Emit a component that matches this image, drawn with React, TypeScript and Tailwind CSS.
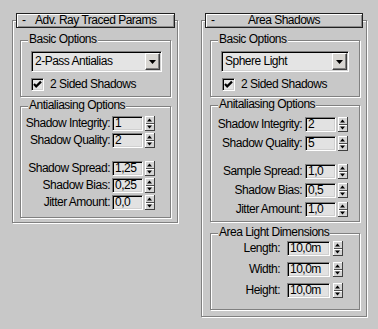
import React from "react";

const FONT =
  "font-['Liberation_Sans',Arial,sans-serif] text-[12px] tracking-[-0.5px] text-black";
const ETCH =
  "border border-[#808080] shadow-[inset_1px_1px_0_#ffffff,1px_1px_0_#ffffff]";
const SUNKEN =
  "border border-t-[#808080] border-l-[#808080] border-r-white border-b-white shadow-[inset_1px_1px_0_#000000,inset_-1px_-1px_0_#d0d0d0]";
const RAISED =
  "border border-t-white border-l-white border-r-[#404040] border-b-[#404040] shadow-[inset_-1px_-1px_0_#808080]";

function Spinner() {
  return (
    <svg width="10" height="15" viewBox="0 0 10 15" className="block shrink-0">
      <rect x="0" y="0" width="10" height="15" fill="#d4d4d4" />
      <rect x="0" y="0" width="10" height="1" fill="#ffffff" />
      <rect x="0" y="0" width="1" height="15" fill="#ffffff" />
      <rect x="9" y="0" width="1" height="15" fill="#404040" />
      <rect x="0" y="14" width="10" height="1" fill="#404040" />
      <rect x="1" y="7" width="8" height="1" fill="#505050" />
      <rect x="1" y="8" width="8" height="1" fill="#ffffff" />
      <polygon points="2,5.5 7,5.5 4.5,2.5" fill="#000000" />
      <polygon points="2,9.5 7,9.5 4.5,12.5" fill="#000000" />
    </svg>
  );
}

function Header({ title, cls }: { title: string; cls: string }) {
  return (
    <div
      className={`h-[15px] -mt-[8px] border border-[#202020] bg-[#cacaca] shadow-[inset_1px_1px_0_#ffffff,inset_-1px_-1px_0_#8c8c8c] grid grid-cols-[18px_1fr_18px] items-center leading-[13px] ${cls}`}
    >
      <span className="pl-[5px]">-</span>
      <span className="text-center whitespace-nowrap">{title}</span>
      <span />
    </div>
  );
}

function Group({
  title,
  cls,
  children,
}: {
  title: string;
  cls: string;
  children?: React.ReactNode;
}) {
  return (
    <div className={`${ETCH} ${cls} flex flex-col`}>
      <span className="self-start -mt-[8px] ml-[7px] px-[1px] bg-[#c8c8c8] leading-[13px] whitespace-nowrap">
        {title}
      </span>
      {children}
    </div>
  );
}

function Dropdown({
  value,
  cls,
  btnCls,
}: {
  value: string;
  cls: string;
  btnCls: string;
}) {
  return (
    <div
      className={`h-[21px] ${SUNKEN} bg-[#e4e4e4] flex items-center justify-between ${cls}`}
    >
      <span className="pl-[3px] leading-[13px] whitespace-nowrap">{value}</span>
      <div
        className={`h-[17px] mr-[1px] ${RAISED} bg-[#d8d6d2] flex items-center justify-center ${btnCls}`}
      >
        <svg width="7" height="4" viewBox="0 0 7 4" className="block">
          <polygon points="0,0 7,0 3.5,4" fill="#000000" />
        </svg>
      </div>
    </div>
  );
}

function Check({ label, cls }: { label: string; cls: string }) {
  return (
    <div className={`flex items-center h-[13px] ${cls}`}>
      <div className={`w-[13px] h-[13px] ${SUNKEN} bg-[#e4e4e4] flex items-center justify-center`}>
        <svg width="11" height="11" viewBox="0 0 11 11" className="block">
          <polyline
            points="2,5 4.2,7.4 9,2.6"
            fill="none"
            stroke="#000000"
            strokeWidth="2.2"
          />
        </svg>
      </div>
      <span className="ml-[6px] leading-[13px] whitespace-nowrap">{label}</span>
    </div>
  );
}

function Row({
  label,
  value,
  inputCls,
  labelCls,
  spinCls,
  cls = "",
}: {
  label: string;
  value: string;
  inputCls: string;
  labelCls: string;
  spinCls: string;
  cls?: string;
}) {
  return (
    <div className={`flex items-center justify-end h-[15px] ${cls}`}>
      <span className={`leading-[13px] whitespace-nowrap ${labelCls}`}>{label}</span>
      <div
        className={`h-[15px] ${SUNKEN} bg-[#e2e2e2] flex items-center pl-[2px] leading-[13px] ${inputCls}`}
      >
        {value}
      </div>
      <div className={spinCls}>
        <Spinner />
      </div>
    </div>
  );
}

export default function App() {
  return (
    <div
      className={`w-[378px] h-[329px] bg-[#c8c8c8] flex items-start pl-[12px] gap-[23px] overflow-hidden ${FONT}`}
    >
      {/* Left panel */}
      <div className={`mt-[20px] w-[166px] h-[203px] ${ETCH} flex flex-col`}>
        <Header title="Adv. Ray Traced Params" cls="ml-[3px] w-[159px]" />
        <Group title="Basic Options" cls="mt-[12px] ml-[7px] w-[151px] h-[57px]">
          <Dropdown value="2-Pass Antialias" cls="mt-[5px] ml-[10px] w-[131px]" btnCls="w-[15px]" />
          <Check label="2 Sided Shadows" cls="mt-[6px] ml-[10px]" />
        </Group>
        <Group title="Antialiasing Options" cls="mt-[9px] ml-[7px] w-[151px] h-[112px]">
          <div className="mt-[4px] pr-[15px] flex flex-col gap-[2px]">
            <Row label="Shadow Integrity:" value="1" inputCls="w-[31px]" labelCls="mr-[2px]" spinCls="ml-[2px]" />
            <Row label="Shadow Quality:" value="2" inputCls="w-[31px]" labelCls="mr-[2px]" spinCls="ml-[2px]" />
            <Row label="Shadow Spread:" value="1,25" inputCls="w-[31px]" labelCls="mr-[2px]" spinCls="ml-[2px]" cls="mt-[11px]" />
            <Row label="Shadow Bias:" value="0,25" inputCls="w-[31px]" labelCls="mr-[2px]" spinCls="ml-[2px]" />
            <Row label="Jitter Amount:" value="0,0" inputCls="w-[31px]" labelCls="mr-[2px]" spinCls="ml-[2px]" />
          </div>
        </Group>
      </div>

      {/* Right panel */}
      <div className={`mt-[20px] w-[166px] h-[297px] ${ETCH} flex flex-col`}>
        <Header title="Area Shadows" cls="ml-[3px] w-[158px]" />
        <Group title="Basic Options" cls="mt-[12px] ml-[8px] w-[150px] h-[57px]">
          <Dropdown value="Sphere Light" cls="mt-[5px] ml-[10px] w-[128px]" btnCls="w-[15px]" />
          <Check label="2 Sided Shadows" cls="mt-[6px] ml-[11px]" />
        </Group>
        <Group title="Anitaliasing Options" cls="mt-[8px] ml-[8px] w-[150px] h-[117px]">
          <div className="mt-[6px] pr-[11px] flex flex-col gap-[4px]">
            <Row label="Shadow Integrity:" value="2" inputCls="w-[31px]" labelCls="mr-[3px]" spinCls="ml-[2px]" />
            <Row label="Shadow Quality:" value="5" inputCls="w-[31px]" labelCls="mr-[3px]" spinCls="ml-[2px]" />
            <Row label="Sample Spread:" value="1,0" inputCls="w-[31px]" labelCls="mr-[3px]" spinCls="ml-[2px]" cls="mt-[9px]" />
            <Row label="Shadow Bias:" value="0,5" inputCls="w-[31px]" labelCls="mr-[3px]" spinCls="ml-[2px]" />
            <Row label="Jitter Amount:" value="1,0" inputCls="w-[31px]" labelCls="mr-[3px]" spinCls="ml-[2px]" />
          </div>
        </Group>
        <Group title="Area Light Dimensions" cls="mt-[11px] ml-[8px] w-[150px] h-[77px]">
          <div className="mt-[2px] pr-[16px] flex flex-col gap-[6px]">
            <Row label="Length:" value="10,0m" inputCls="w-[43px]" labelCls="mr-[7px]" spinCls="ml-[3px]" />
            <Row label="Width:" value="10,0m" inputCls="w-[43px]" labelCls="mr-[7px]" spinCls="ml-[3px]" />
            <Row label="Height:" value="10,0m" inputCls="w-[43px]" labelCls="mr-[7px]" spinCls="ml-[3px]" />
          </div>
        </Group>
      </div>
    </div>
  );
}
